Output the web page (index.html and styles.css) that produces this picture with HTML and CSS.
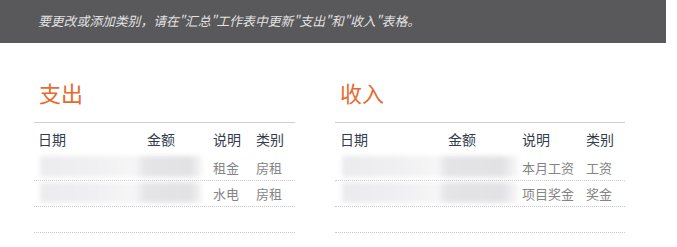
FILE: index.html
```html
<!DOCTYPE html>
<html lang="zh-CN">
<head>
<meta charset="utf-8">
<link rel="stylesheet" href="styles.css">
</head>
<body>
<div class="banner">要更改或添加类别，请在"汇总"工作表中更新"支出"和"收入"表格。</div>
<div class="main">
  <section class="sec sec-left">
    <h2 class="title">支出</h2>
    <div class="table">
      <div class="row head"><span>日期</span><span>金额</span><span>说明</span><span>类别</span></div>
      <div class="row"><span class="redact"><i class="smear"></i></span><span>租金</span><span>房租</span></div>
      <div class="row"><span class="redact"><i class="smear"></i></span><span>水电</span><span>房租</span></div>
      <div class="row"></div>
    </div>
  </section>
  <section class="sec sec-right">
    <h2 class="title">收入</h2>
    <div class="table">
      <div class="row head"><span>日期</span><span>金额</span><span>说明</span><span>类别</span></div>
      <div class="row"><span class="redact"><i class="smear wide"></i></span><span>本月工资</span><span>工资</span></div>
      <div class="row"><span class="redact"><i class="smear wide"></i></span><span>项目奖金</span><span>奖金</span></div>
      <div class="row"></div>
    </div>
  </section>
</div>
</body>
</html>
```
FILE: styles.css
```css
html, body {
  margin: 0;
  padding: 0;
  background: #ffffff;
  font-family: "Noto Sans CJK SC", "Noto Sans", sans-serif;
}

.banner {
  width: 666px;
  height: 43px;
  box-sizing: border-box;
  padding-left: 38px;
  padding-bottom: 2px;
  background: #59585a;
  color: #e2e2e2;
  font-size: 12.8px;
  font-style: italic;
  display: flex;
  align-items: center;
}

.main {
  display: flex;
  padding-left: 34px;
  gap: 40px;
}

.sec-left { width: 261px; }
.sec-right { width: 290px; }

.title {
  margin: 36px 0 0 0;
  padding-left: 5px;
  height: 43px;
  line-height: 26px;
  font-size: 22px;
  font-weight: normal;
  color: #e8692c;
}

.table {
  border-top: 1px solid #cfcfd3;
}

.row {
  display: grid;
  align-items: center;
  height: 25px;
  border-bottom: 1px dotted #c8c8cc;
  font-size: 13px;
  color: #858585;
}

.sec-left .row {
  grid-template-columns: 109px 66px 43px 1fr;
  padding-left: 4px;
}

.sec-right .row {
  grid-template-columns: 108px 74px 64px 1fr;
  padding-left: 5px;
}

.row.head {
  height: 31px;
  border-bottom: none;
  font-size: 14px;
  color: #323c4c;
  padding-bottom: 1px;
}

.redact {
  grid-column: 1 / 3;
  position: relative;
  height: 20px;
  margin-top: -3px;
}

.smear {
  display: block;
  width: 162px;
  height: 21px;
  margin-left: 2px;
  background: linear-gradient(to right, #ececee 0px, #f0f0f2 55px, #f6f6f7 95px, #e5e5e8 105px, #e2e2e5 150px, #fbfbfb 165px);
  filter: blur(2.5px);
}

.smear.wide {
  width: 177px;
  background: linear-gradient(to right, #ebebed 0px, #f0f0f2 60px, #f6f6f7 95px, #e4e4e7 105px, #e2e2e5 160px, #fbfbfb 178px);
}
```
